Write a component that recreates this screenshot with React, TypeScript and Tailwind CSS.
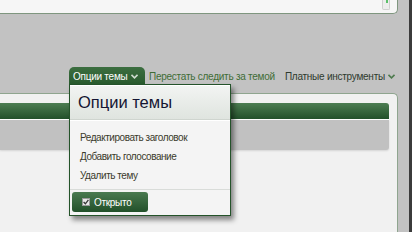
import React from 'react';

const Chevron: React.FC<{ className?: string }> = ({ className }) => (
  <svg width="7" height="5" viewBox="0 0 7 5" className={className}>
    <path d="M0.5 0.8 L3.5 3.8 L6.5 0.8" fill="none" stroke="currentColor" strokeWidth="1.6" />
  </svg>
);

const ThreadMenu: React.FC = () => (
  <div className="absolute left-[69px] top-[84px] w-[162px] border border-[#24532a] bg-[#f4f4f4] shadow-[3px_4px_5px_rgba(0,0,0,0.45)]">
    <div className="h-px bg-white" />
    <div className="h-[34px] flex items-center pl-[8px] bg-gradient-to-b from-[#f2f4f2] to-[#dfe4df] border-b border-[#cfd5cf] text-[16.5px] leading-none text-[#141432] whitespace-nowrap">
      Опции темы
    </div>
    <div className="border-t border-white pt-[7px] pb-[4px] flex flex-col text-[10px] tracking-[-0.45px] text-[#3b3b2c] whitespace-nowrap">
      <div className="h-[19px] flex items-center pl-[10px]">Редактировать заголовок</div>
      <div className="h-[19px] flex items-center pl-[10px]">Добавить голосование</div>
      <div className="h-[19px] flex items-center pl-[10px]">Удалить тему</div>
    </div>
    <div className="border-t border-[#d9dcd9] pt-[2px] pb-[3px] pl-[2px]">
      <div className="w-[76px] h-[20px] rounded-[3px] bg-gradient-to-b from-[#4a7a50] to-[#22502a] flex items-center pl-[10px] gap-[4px] text-white text-[10px] tracking-[-0.3px] whitespace-nowrap">
        <span className="w-[8px] h-[8px] bg-[#e8e8e8] border border-[#9a9a9a] flex items-center justify-center">
          <svg width="6" height="6" viewBox="0 0 6 6">
            <path d="M0.6 3 L2.4 4.8 L5.4 0.8" fill="none" stroke="#333" strokeWidth="1.3" />
          </svg>
        </span>
        <span>Открыто</span>
      </div>
    </div>
  </div>
);

export default function App() {
  return (
    <div
      className="relative w-[412px] h-[232px] overflow-hidden bg-[#c2c2c2] flex"
      style={{ fontFamily: '"Liberation Sans", Arial, sans-serif' }}
    >
      <div className="w-[398px] flex flex-col">
        {/* top panel */}
        <div className="h-[14px] bg-[#f6f6f6] border-b border-r border-[#7f967f] rounded-br-[5px] flex justify-end pr-[7px]">
          <div className="w-[8px] h-[10px] bg-[#ededed] border border-[#d0d0d0] border-t-0 rounded-b-[2px] flex justify-end">
            <span className="w-[2px] h-[3px] bg-[#5bbf6a] mr-[1px]" />
          </div>
        </div>

        {/* tabs */}
        <div className="mt-[53px] h-[18px] flex items-stretch text-[10px] tracking-[-0.25px] whitespace-nowrap">
          <div className="ml-[69px] w-[76px] rounded-t-[5px] bg-gradient-to-b from-[#3c6e40] to-[#285a2d] text-white flex items-center pt-[1px] pl-[4px] gap-[4px]">
            <span>Опции темы</span>
            <Chevron className="text-[#cfdccf]" />
          </div>
          <div className="ml-[4px] pt-[1px] flex items-center text-[#3f6d36]">Перестать следить за темой</div>
          <div className="ml-[10px] pt-[1px] flex items-center gap-[3px] text-[#2e3a2e]">
            <span>Платные инструменты</span>
            <Chevron className="text-[#4d7a4d]" />
          </div>
        </div>

        {/* main panel */}
        <div className="mt-[8px] flex-1 bg-[#f1f1f1] border-t border-r border-[#8fa58f] rounded-tr-[5px] flex flex-col pt-[9px] pr-[8px]">
          <div className="h-[17px] bg-gradient-to-b from-[#4d7d52] to-[#22502a] rounded-tr-[3px] border-b border-white" />
          <div className="h-[30px] bg-[#c1c1c1] rounded-br-[3px] shadow-[0_1px_2px_rgba(0,0,0,0.12)]" />
        </div>
      </div>
      <div className="flex-1" />
      <div className="w-[3px] bg-[#3b3b3b]" />

      <ThreadMenu />
    </div>
  );
}
